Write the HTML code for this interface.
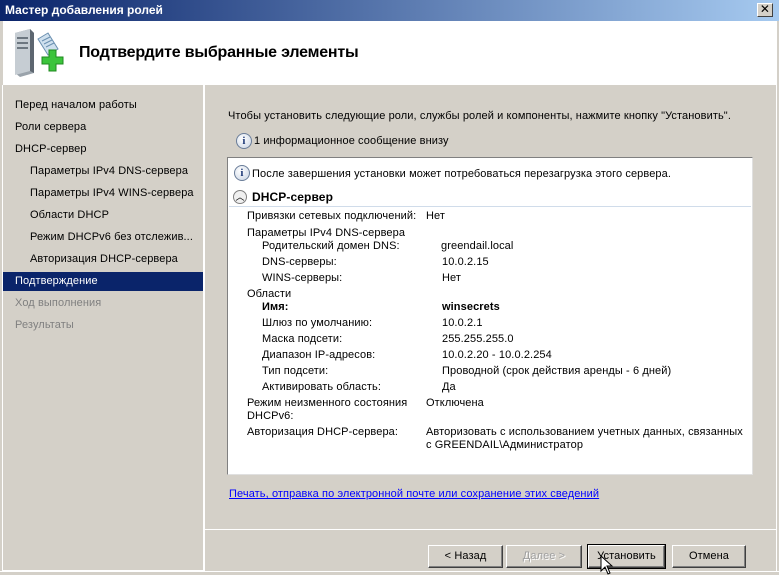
<!DOCTYPE html>
<html><head><meta charset="utf-8"><style>
*{margin:0;padding:0;box-sizing:border-box}
body{width:779px;height:574px;background:#d4d0c8;font-family:"Liberation Sans","DejaVu Sans",sans-serif;font-size:11px;letter-spacing:0.1px;color:#000;position:relative;overflow:hidden}
.a{position:absolute;white-space:nowrap}
#tb{left:0;top:0;width:779px;height:21px;background:linear-gradient(90deg,#0a246a,#a6caf0);color:#fff;font-weight:bold;font-size:12px;padding:3px 0 0 5px;letter-spacing:0}
#x{left:757px;top:3px;width:16px;height:14px;background:#d4d0c8;border:1px solid;border-color:#fff #404040 #404040 #fff;font-size:12px;font-weight:bold;text-align:center;line-height:11px;color:#000}
#hd{left:3px;top:21px;width:773px;height:64px;background:#fff}
#lp{left:2px;top:85px;width:201px;height:486px;border-left:1px solid #fff;border-bottom:1px solid #fff}
#dv{left:203px;top:85px;width:2px;height:486px;background:#fff}
.n{left:15px}
.n2{left:30px}
.g{color:#808080}
#sel{left:3px;top:272px;width:200px;height:19px;background:#0a246a;color:#fff;padding:3px 0 0 12px}
#box{left:227px;top:157px;width:526px;height:318px;background:#fff;border:1px solid;border-color:#808080 #e0e0e0 #e0e0e0 #808080}
.i{width:16px;height:16px;border-radius:50%;border:1px solid #6a7d99;background:radial-gradient(circle at 40% 35%,#fff,#c8d3e3);color:#1f3a78;font:bold 11px "Liberation Serif",serif;text-align:center;line-height:14px}
.btn{top:545px;height:23px;background:#d4d0c8;border:1px solid;border-color:#fff #404040 #404040 #fff;box-shadow:inset -1px -1px #808080;text-align:center;line-height:21px}
</style></head><body>
<div class="a" id="tb">Мастер добавления ролей</div>
<div class="a" id="x">✕</div>
<div class="a" id="hd"></div>
<svg class="a" style="left:12px;top:27px" width="52" height="52" viewBox="0 0 52 52">
<path d="M3 6 L18 2 L22 6 L22 46 L8 50 L3 46Z" fill="#9aa3ab"/>
<path d="M3 6 L18 2 L18 44 L3 48Z" fill="#c6cdd3"/>
<path d="M18 2 L22 6 L22 46 L18 44Z" fill="#5d6670"/>
<rect x="5" y="10" width="11" height="2" fill="#6d7780"/><rect x="5" y="15" width="11" height="2" fill="#6d7780"/><rect x="5" y="20" width="11" height="2" fill="#6d7780"/>
<path d="M26 12 L36 6 L46 22 L36 28Z" fill="#cfe0ee" stroke="#6a8fb0"/>
<path d="M30 14 L38 10 M32 17 L40 13 M34 20 L42 16" stroke="#6a8fb0"/>
<path d="M30 30h7v-7h7v7h7v7h-7v7h-7v-7h-7z" fill="#3cc43c" stroke="#1f8a1f"/>
</svg>
<div class="a" style="left:79px;top:44px;font-size:16px;font-weight:bold;letter-spacing:-0.2px">Подтвердите выбранные элементы</div>
<div class="a" id="lp"></div>
<div class="a" id="dv"></div>
<div class="a n" style="top:99px">Перед началом работы</div>
<div class="a n" style="top:121px">Роли сервера</div>
<div class="a n" style="top:143px">DHCP-сервер</div>
<div class="a n2" style="top:165px">Параметры IPv4 DNS-сервера</div>
<div class="a n2" style="top:187px">Параметры IPv4 WINS-сервера</div>
<div class="a n2" style="top:209px">Области DHCP</div>
<div class="a n2" style="top:231px">Режим DHCPv6 без отслежив...</div>
<div class="a n2" style="top:253px">Авторизация DHCP-сервера</div>
<div class="a" id="sel">Подтверждение</div>
<div class="a n g" style="top:297px">Ход выполнения</div>
<div class="a n g" style="top:319px">Результаты</div>
<div class="a" style="left:228px;top:110px">Чтобы установить следующие роли, службы ролей и компоненты, нажмите кнопку "Установить".</div>
<div class="a i" style="left:236px;top:133px">i</div>
<div class="a" style="left:254px;top:135px">1 информационное сообщение внизу</div>
<div class="a" id="box"></div>
<div class="a i" style="left:234px;top:165px">i</div>
<div class="a" style="left:252px;top:168px">После завершения установки может потребоваться перезагрузка этого сервера.</div>
<div class="a" style="left:233px;top:190px;width:14px;height:14px;border-radius:50%;border:1px solid #808080;background:#f0f0f0;font-size:9px;text-align:center;line-height:12px">︿</div>
<div class="a" style="left:252px;top:190px;font-weight:bold;font-size:12px">DHCP-сервер</div>
<div class="a" style="left:229px;top:206px;width:522px;height:1px;background:#d0dcea"></div>
<div class="a" style="left:247px;top:210px">Привязки сетевых подключений:</div><div class="a" style="left:426px;top:210px">Нет</div>
<div class="a" style="left:247px;top:227px">Параметры IPv4 DNS-сервера</div>
<div class="a" style="left:262px;top:240px">Родительский домен DNS:</div><div class="a" style="left:441px;top:240px">greendail.local</div>
<div class="a" style="left:262px;top:256px">DNS-серверы:</div><div class="a" style="left:442px;top:256px">10.0.2.15</div>
<div class="a" style="left:262px;top:272px">WINS-серверы:</div><div class="a" style="left:442px;top:272px">Нет</div>
<div class="a" style="left:247px;top:288px">Области</div>
<div class="a" style="left:262px;top:301px;font-weight:bold">Имя:</div><div class="a" style="left:442px;top:301px;font-weight:bold">winsecrets</div>
<div class="a" style="left:262px;top:317px">Шлюз по умолчанию:</div><div class="a" style="left:442px;top:317px">10.0.2.1</div>
<div class="a" style="left:262px;top:333px">Маска подсети:</div><div class="a" style="left:442px;top:333px">255.255.255.0</div>
<div class="a" style="left:262px;top:349px">Диапазон IP-адресов:</div><div class="a" style="left:442px;top:349px">10.0.2.20 - 10.0.2.254</div>
<div class="a" style="left:262px;top:365px">Тип подсети:</div><div class="a" style="left:442px;top:365px">Проводной (срок действия аренды - 6 дней)</div>
<div class="a" style="left:262px;top:381px">Активировать область:</div><div class="a" style="left:442px;top:381px">Да</div>
<div class="a" style="left:247px;top:397px">Режим неизменного состояния</div><div class="a" style="left:426px;top:397px">Отключена</div>
<div class="a" style="left:247px;top:410px">DHCPv6:</div>
<div class="a" style="left:247px;top:426px">Авторизация DHCP-сервера:</div><div class="a" style="left:426px;top:426px">Авторизовать с использованием учетных данных, связанных</div>
<div class="a" style="left:426px;top:439px">с GREENDAIL\Администратор</div>
<div class="a" style="left:229px;top:488px;color:#0000ff;text-decoration:underline">Печать, отправка по электронной почте или сохранение этих сведений</div>
<div class="a" style="left:205px;top:529px;width:571px;height:1px;background:#fff"></div>
<div class="a" style="left:776px;top:21px;width:1px;height:550px;background:#fff"></div>
<div class="a" style="left:0;top:571px;width:779px;height:1px;background:#fff"></div>
<div class="a btn" style="left:428px;width:75px">&lt; Назад</div>
<div class="a btn" style="left:506px;width:76px;color:#a0a0a0;text-shadow:1px 1px #fff">Далее &gt;</div>
<div class="a btn" style="left:588px;width:77px;outline:1px solid #000">Установить</div>
<div class="a btn" style="left:672px;width:74px">Отмена</div>
<svg class="a" style="left:600px;top:555px" width="14" height="20"><path d="M1 1 L1 16 L5 12 L8 19 L10 18 L7 11 L12 11Z" fill="#fff" stroke="#000"/></svg>
</body></html>
